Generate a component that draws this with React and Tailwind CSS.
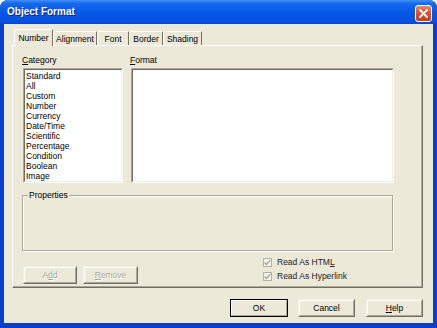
import React from "react";

const categories = [
  "Standard",
  "All",
  "Custom",
  "Number",
  "Currency",
  "Date/Time",
  "Scientific",
  "Percentage",
  "Condition",
  "Boolean",
  "Image",
];

const tabs = [
  { label: "Number", w: "w-[39px]", active: true },
  { label: "Alignment", w: "w-[44px]" },
  { label: "Font", w: "w-[32px]" },
  { label: "Border", w: "w-[34px]" },
  { label: "Shading", w: "w-[39px]" },
];

const Button = ({ children, w, disabled, isDefault }) => (
  <div
    className={`${w} h-[18px] border ${
      isDefault
        ? "border-black"
        : "border-t-[#F1EFE2] border-l-[#F1EFE2] border-r-[#716F64] border-b-[#716F64]"
    }`}
  >
    <div
      className={`h-full flex items-center justify-center border border-t-white border-l-white border-r-[#ACA899] border-b-[#ACA899] text-[8.5px] leading-[10px] ${
        disabled ? "text-[#ACA899] [text-shadow:1px_1px_0_#fff]" : "text-black"
      }`}
    >
      {children}
    </div>
  </div>
);

const Check = ({ children }) => (
  <div className="h-[14px] flex items-start gap-[5px]">
    <div className="w-[9px] h-[9px] mt-[1px] border border-[#B5B2A4] bg-[#F4F3EE] flex items-center justify-center">
      <svg width="7" height="7" viewBox="0 0 7 7">
        <path d="M0.5 3.5 L2.5 5.5 L6.5 1" fill="none" stroke="#ACA899" strokeWidth="1.4" />
      </svg>
    </div>
    <span className="text-[8.5px] leading-[10px] text-[#222]">{children}</span>
  </div>
);

export default function App() {
  return (
    <div className="w-[437px] h-[328px] flex flex-col bg-[#0A3ECF] rounded-t-[8px] overflow-hidden font-['Liberation_Sans',Arial,sans-serif] text-black">
      {/* Title bar */}
      <div className="h-[24px] shrink-0 flex items-center justify-between pl-[7px] pr-[5px] bg-[linear-gradient(180deg,#4392F7_0%,#1769EE_14%,#0658E8_50%,#0551DE_85%,#0A48CC_100%)]">
        <span className="text-white font-bold text-[10px] leading-[12px] [text-shadow:1px_1px_0_#0A1E8A]">
          Object Format
        </span>
        <div className="w-[17px] h-[17px] mt-[2px] rounded-[3px] border border-white bg-[linear-gradient(180deg,#E98A6C_0%,#D9532E_45%,#C63E19_100%)] flex items-center justify-center">
          <svg width="9" height="9" viewBox="0 0 9 9">
            <path d="M1 1 L8 8 M8 1 L1 8" stroke="#fff" strokeWidth="1.8" strokeLinecap="square" />
          </svg>
        </div>
      </div>

      {/* Body */}
      <div className="flex-1 mx-[4px] mb-[5px] bg-[#ECE9D8] flex flex-col">
        {/* Tabs */}
        <div className="pt-[5px] pl-[10px] h-[21px] flex items-end">
          {tabs.map((t) =>
            t.active ? (
              <div
                key={t.label}
                className={`${t.w} h-[17px] -mb-[1px] relative z-10 bg-[#ECE9D8] border-t border-l border-white border-r border-r-[#716F64] flex items-start justify-center pt-[3px] text-[8.5px] leading-[10px]`}
              >
                {t.label}
              </div>
            ) : (
              <div
                key={t.label}
                className={`${t.w} h-[14px] bg-[#ECE9D8] border-t border-l border-white border-r border-r-[#716F64] flex items-start justify-center pt-[2px] text-[8.5px] leading-[10px] -ml-[0px]`}
              >
                {t.label}
              </div>
            )
          )}
        </div>

        {/* Tab panel */}
        <div className="ml-[8px] w-[411px] h-[243px] border border-t-white border-l-white border-r-[#716F64] border-b-[#716F64] shadow-[inset_-1px_-1px_0_#ACA899] flex flex-col">
          <div className="mt-[9px] h-[10px] flex text-[8.5px] leading-[10px]">
            <span className="ml-[9px] w-[108px]">
              <span className="underline">C</span>ategory
            </span>
            <span>
              <span className="underline">F</span>ormat
            </span>
          </div>

          <div className="mt-[3px] ml-[10px] flex gap-[8px]">
            <div className="w-[100px] h-[115px] border border-t-[#ACA899] border-l-[#ACA899] border-r-white border-b-white">
              <div className="h-full bg-white border border-t-[#716F64] border-l-[#716F64] border-r-[#F1EFE2] border-b-[#F1EFE2] pl-[1px] pt-[1px]">
                {categories.map((c) => (
                  <div key={c} className="text-[8.5px] leading-[10px]">
                    {c}
                  </div>
                ))}
              </div>
            </div>
            <div className="w-[263px] h-[115px] border border-t-[#ACA899] border-l-[#ACA899] border-r-white border-b-white">
              <div className="h-full bg-white border border-t-[#716F64] border-l-[#716F64] border-r-[#F1EFE2] border-b-[#F1EFE2]" />
            </div>
          </div>

          {/* Properties group */}
          <div className="mt-[12px] ml-[9px] w-[371px] h-[56px] relative border border-[#ACA899] shadow-[inset_1px_1px_0_#fff,1px_1px_0_#fff]">
            <span className="absolute left-[5px] -top-[6px] px-[1px] bg-[#ECE9D8] text-[8.5px] leading-[10px]">
              Properties
            </span>
          </div>

          <div className="mt-[6px] flex items-start">
            <div className="ml-[10px] mt-[9px] flex gap-[6px]">
              <Button w="w-[54px]" disabled>
                A<span className="underline">d</span>d
              </Button>
              <Button w="w-[55px]" disabled>
                <span className="underline">R</span>emove
              </Button>
            </div>
            <div className="ml-[125px] flex flex-col">
              <Check>
                Read As HTM<span className="underline">L</span>
              </Check>
              <Check>Read As Hyperlink</Check>
            </div>
          </div>
        </div>

        {/* Dialog buttons */}
        <div className="mt-[11px] pr-[10px] flex justify-end">
          <Button w="w-[58px]" isDefault>
            OK
          </Button>
          <div className="ml-[10px]">
            <Button w="w-[57px]">Cancel</Button>
          </div>
          <div className="ml-[11px]">
            <Button w="w-[57px]">
              <span className="underline">H</span>elp
            </Button>
          </div>
        </div>
      </div>
    </div>
  );
}
